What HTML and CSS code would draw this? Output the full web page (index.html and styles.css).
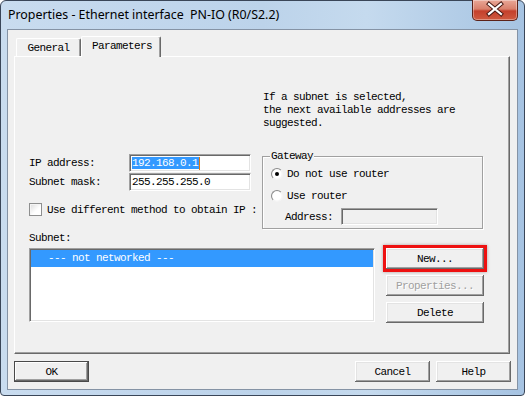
FILE: index.html
```html
<!DOCTYPE html>
<html>
<head>
<meta charset="utf-8">
<link rel="stylesheet" href="styles.css">
</head>
<body>
<div class="window">
  <div class="titlebar">
    <span class="title">Properties - Ethernet interface&nbsp; PN-IO (R0/S2.2)</span>
    <div class="close">
      <svg width="46" height="21" viewBox="0 0 46 21">
        <path d="M17 5 L29 15 M29 5 L17 15" stroke="#4a1a14" stroke-width="4.2" stroke-linecap="square"/>
        <path d="M17 5 L29 15 M29 5 L17 15" stroke="#ffffff" stroke-width="2.2" stroke-linecap="square"/>
      </svg>
    </div>
  </div>
  <div class="client">
    <div class="tabs">
      <div class="tab">General</div>
      <div class="tab active">Parameters</div>
    </div>
    <div class="panel">
      <p class="hint">If a subnet is selected,<br>the next available addresses are<br>suggested.</p>
      <div class="mid">
        <div class="fields">
          <div class="field"><span class="lbl">IP address:</span><span class="input"><span class="selected">192.168.0.1</span><span class="caret"></span></span></div>
          <div class="field"><span class="lbl">Subnet mask:</span><span class="input">255.255.255.0</span></div>
          <div class="check-row"><span class="checkbox"></span><span>Use different method to obtain IP :</span></div>
        </div>
        <div class="group">
          <div class="legend">Gateway</div>
          <div class="radio-row first"><span class="radio checked"></span><span>Do not use router</span></div>
          <div class="radio-row"><span class="radio"></span><span>Use router</span></div>
          <div class="addr-row"><span>Address:</span><span class="input disabled"></span></div>
        </div>
      </div>
      <div class="subnet-lbl">Subnet:</div>
      <div class="bottom">
        <div class="list"><div class="row sel">--- not networked ---</div></div>
        <div class="btncol">
          <button class="btn new">New...</button>
          <button class="btn" disabled>Properties...</button>
          <button class="btn">Delete</button>
        </div>
      </div>
    </div>
    <div class="footer">
      <button class="btn default">OK</button>
      <span class="spacer"></span>
      <button class="btn">Cancel</button>
      <button class="btn">Help</button>
    </div>
  </div>
</div>
</body>
</html>
```
FILE: styles.css
```css
* { box-sizing: border-box; }
html, body { margin: 0; padding: 0; }
body { width: 525px; height: 396px; overflow: hidden; background: #fff; }

.window {
  width: 525px;
  height: 396px;
  border: 1px solid #3a4658;
  border-radius: 6px 6px 4px 4px;
  background: linear-gradient(90deg, #c9dcef 0%, #c2d7ed 25%, #bcd3ea 50%, #c5daee 70%, #b0cbe6 90%, #a6c3e2 100%);
  display: flex;
  flex-direction: column;
  font-family: "Liberation Mono", "DejaVu Sans Mono", monospace;
  font-size: 11px;
  letter-spacing: -0.6px;
  color: #000;
}

.titlebar {
  height: 28px;
  display: flex;
  align-items: flex-start;
  padding-left: 7px;
}
.title {
  flex: 1;
  font-family: "Noto Sans", "Open Sans", sans-serif;
  font-size: 12.4px;
  letter-spacing: 0;
  line-height: 27px;
  color: #000;
}
.close {
  width: 46px;
  height: 21px;
  margin-top: -1px;
  margin-right: 6px;
  border: 1px solid #5b2219;
  border-top: none;
  border-radius: 0 0 5px 5px;
  background: linear-gradient(180deg, #e9a797 0%, #d9806c 45%, #c4402c 55%, #cf5a40 100%);
  box-shadow: inset 0 0 0 1px rgba(255,255,255,0.35);
  overflow: hidden;
}
.close svg { display: block; margin: -1px 0 0 -1px; }

.client {
  margin: 0 6px;
  height: 361px;
  border: 1px solid #8593a5;
  background: #f0f0f0;
  padding: 0 6px;
}

.tabs {
  display: flex;
  align-items: flex-end;
  height: 26px;
  margin-left: 2px;
  position: relative;
  z-index: 1;
}
.tab {
  height: 18px;
  width: 65px;
  text-align: center;
  line-height: 18px;
  border-top: 1px solid #fff;
  border-left: 1px solid #fff;
  border-right: 1px solid #696969;
  box-shadow: inset -1px 0 #a0a0a0;
  border-radius: 2px 2px 0 0;
  background: #f0f0f0;
}
.tab.active {
  width: 80px;
  height: 21px;
  margin-bottom: -1px;
  padding: 0 0 0 10px;
  text-align: left;
  line-height: 18px;
}

.panel {
  width: 496px;
  height: 298px;
  border-top: 1px solid #fff;
  border-left: 1px solid #fff;
  border-right: 1px solid #696969;
  border-bottom: 1px solid #696969;
  box-shadow: inset -1px -1px #a0a0a0;
  padding: 34px 0 0 14px;
}

.hint {
  margin: 0 0 0 234px;
  line-height: 13px;
  white-space: nowrap;
}

.mid {
  display: flex;
  align-items: flex-start;
  margin-top: 24px;
  height: 75px;
}
.fields { width: 222px; }
.field {
  display: flex;
  align-items: center;
  height: 18px;
  margin-bottom: 1px;
}
.lbl { width: 100px; }
.input {
  display: flex;
  align-items: center;
  width: 122px;
  height: 18px;
  background: #fff;
  border: 1px solid;
  border-color: #a0a0a0 #fff #fff #a0a0a0;
  box-shadow: inset 1px 1px #696969, inset -1px -1px #e3e3e3;
  padding-left: 2px;
  font-family: "Liberation Mono", monospace;
  line-height: 13px;
}
.selected {
  background: #3399ff;
  color: #fff;
  line-height: 12px;
  padding-right: 1px;
}
.caret {
  width: 1px;
  height: 13px;
  background: #e07a10;
}
.check-row {
  display: flex;
  align-items: center;
  height: 13px;
  margin-top: 12px;
  white-space: nowrap;
}
.checkbox {
  width: 13px;
  height: 13px;
  border: 1px solid #8e8f8f;
  background: linear-gradient(135deg, #dcdcdc, #fff 60%);
  box-shadow: inset 1px 1px #f4f4f4;
  margin-right: 5px;
  flex: none;
}

.group {
  width: 221px;
  height: 73px;
  margin: 2px 0 0 11px;
  border: 1px solid #a0a0a0;
  box-shadow: inset 1px 1px #fff, 1px 1px #fff;
  padding: 0 0 0 8px;
}
.legend {
  width: fit-content;
  margin: -7px 0 0 -1px;
  padding: 0 1px;
  line-height: 13px;
  background: #f0f0f0;
}
.radio-row {
  display: flex;
  align-items: center;
  height: 14px;
  margin-top: 8px;
}
.radio-row.first { margin-top: 4px; }
.radio {
  width: 12px;
  height: 12px;
  border-radius: 50%;
  border: 1px solid;
  border-color: #8a8a8a #f4f4f4 #f4f4f4 #8a8a8a;
  background: radial-gradient(circle, #fff 55%, #e6e6e6 100%);
  margin-right: 4px;
  display: flex;
  align-items: center;
  justify-content: center;
  flex: none;
}
.radio.checked::after {
  content: "";
  width: 4px;
  height: 4px;
  border-radius: 50%;
  background: #000;
}
.addr-row {
  display: flex;
  align-items: center;
  margin: 5px 0 0 14px;
  gap: 8px;
}
.input.disabled {
  width: 97px;
  height: 17px;
  background: #f0f0f0;
}

.subnet-lbl {
  line-height: 13px;
  margin-top: 3px;
}
.bottom {
  display: flex;
  margin-top: 3px;
}
.list {
  width: 346px;
  height: 74px;
  background: #fff;
  border: 1px solid;
  border-color: #a0a0a0 #fff #fff #a0a0a0;
  box-shadow: inset 1px 1px #696969, inset -1px -1px #e3e3e3;
  padding: 1px 1px 0 1px;
}
.row {
  height: 17px;
  line-height: 17px;
  padding-left: 17px;
  white-space: pre;
}
.row.sel { background: #3399ff; color: #fff; }

.btncol {
  display: flex;
  flex-direction: column;
  gap: 6px;
  margin-left: 11px;
}
.btn {
  width: 98px;
  height: 21px;
  padding: 0;
  margin: 0;
  border: none;
  background: #f0f0f0;
  font-family: "Liberation Mono", monospace;
  font-size: 11px;
  letter-spacing: -0.6px;
  color: #000;
  box-shadow: inset -1px -1px #696969, inset 1px 1px #fff, inset -2px -2px #a0a0a0, inset 2px 2px #e3e3e3;
}
.btn:disabled {
  color: #a0a0a0;
  text-shadow: 1px 1px #fff;
}
.btn.new {
  outline: 3px solid #ee1111;
  box-shadow: inset -1px -1px #696969, inset 1px 1px #fff, inset -2px -2px #a0a0a0, inset 2px 2px #e3e3e3, 0 0 3px 3px rgba(60,0,0,0.35);
}

.footer {
  display: flex;
  gap: 6px;
  margin-top: 7px;
}
.footer .btn { width: 75px; }
.spacer { flex: 1; }
.btn.default {
  box-shadow: inset 0 0 0 1px #4a4a4a, inset -2px -2px #696969, inset 2px 2px #fff, inset -3px -3px #a0a0a0;
}
```
